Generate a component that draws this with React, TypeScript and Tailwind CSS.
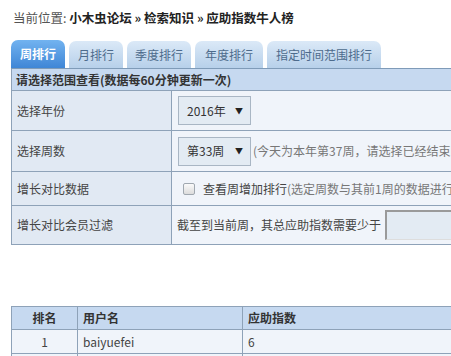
import React from "react";

const tabs = [
  { t: "周排行", w: "w-[54px]" },
  { t: "月排行", w: "w-[54px]" },
  { t: "季度排行", w: "w-[64px]" },
  { t: "年度排行", w: "w-[68px]" },
  { t: "指定时间范围排行", w: "w-[114px]" },
];

function Select({ value }: { value: string }) {
  return (
    <div className="flex h-[29px] w-[73px] items-center justify-between border border-[#a9b6c4] bg-[#e3ebf3] pl-[8px] pr-[7px] text-[12px] text-[#333]">
      <span>{value}</span>
      <span className="text-[8px] text-[#222]">▼</span>
    </div>
  );
}

export default function App() {
  const font = { fontFamily: '"Noto Sans CJK SC", "Noto Sans", sans-serif' };
  return (
    <div className="h-[356px] w-[451px] overflow-hidden bg-white text-[12px] text-[#444]" style={font}>
      <div className="px-[13px] pt-[9px] text-[12.5px] leading-[18px]">
        <span className="text-[#555]">当前位置: </span>
        <span className="font-bold text-[#222]">小木虫论坛 » 检索知识 » 应助指数牛人榜</span>
      </div>

      <div className="ml-[11px] mt-[13px] flex items-end gap-[4px] border-b border-[#7f9bb8]">
        {tabs.map((x, i) => (
          <div
            key={x.t}
            className={
              i === 0
                ? `flex h-[28px] ${x.w} items-center justify-center rounded-t-[7px] bg-gradient-to-b from-[#72b3f0] to-[#3f86d6] font-bold text-white`
                : `flex h-[27px] ${x.w} items-center justify-center rounded-t-[7px] bg-gradient-to-b from-[#dbe9f7] to-[#b7d0ea] text-[#4d6b8c]`
            }
          >
            {x.t}
          </div>
        ))}
      </div>

      <div className="ml-[11px] w-[460px] border-x border-b border-[#8ea2b8] text-[#444]">
        <div className="flex h-[22px] items-center border-b border-[#8ea2b8] bg-[#c6d9f0] px-[4px] font-bold text-[#333]">
          请选择范围查看(数据每60分钟更新一次)
        </div>
        <div className="grid grid-cols-[160px_1fr]">
          <div className="flex h-[40px] items-center border-b border-r border-[#8ea2b8] bg-[#e1e9f3] px-[5px]">选择年份</div>
          <div className="flex h-[40px] items-center border-b border-[#8ea2b8] bg-[#f0f4fa] px-[6px]">
            <Select value="2016年" />
          </div>
          <div className="flex h-[41px] items-center border-b border-r border-[#8ea2b8] bg-[#e1e9f3] px-[5px]">选择周数</div>
          <div className="flex h-[41px] items-center gap-[2px] whitespace-nowrap border-b border-[#8ea2b8] bg-[#f0f4fa] px-[6px]">
            <Select value="第33周" />
            <span className="text-[#777]">(今天为本年第37周，请选择已经结束的周)</span>
          </div>
          <div className="flex h-[34px] items-center border-b border-r border-[#8ea2b8] bg-[#e1e9f3] px-[5px]">增长对比数据</div>
          <div className="flex h-[34px] items-center gap-[8px] whitespace-nowrap border-b border-[#8ea2b8] bg-[#f0f4fa] px-[11px]">
            <span className="h-[12px] w-[12px] rounded-[2px] border border-[#a0a8b0] bg-gradient-to-b from-[#fafafa] to-[#dcdcdc]" />
            <span>查看周增加排行<span className="text-[#777]">(选定周数与其前1周的数据进行对比)</span></span>
          </div>
          <div className="flex h-[38px] items-center border-r border-[#8ea2b8] bg-[#e1e9f3] px-[5px]">增长对比会员过滤</div>
          <div className="flex h-[38px] items-center gap-[4px] whitespace-nowrap bg-[#f0f4fa] pl-[5px]">
            <span>截至到当前周，其总应助指数需要少于</span>
            <span className="h-[30px] w-[100px] border-l-2 border-t-2 border-[#9a9a9a] border-b border-r border-b-[#ddd] border-r-[#ddd] bg-[#e3ebf3]" />
          </div>
        </div>
      </div>

      <div className="ml-[11px] mt-[61px] w-[460px] border border-[#8ea2b8]">
        <div className="grid h-[23px] grid-cols-[66px_165px_1fr] border-b border-[#8ea2b8] bg-[#c6d9f0] font-bold text-[#333]">
          <div className="flex items-center justify-center border-r border-[#8ea2b8]">排名</div>
          <div className="flex items-center border-r border-[#8ea2b8] px-[5px]">用户名</div>
          <div className="flex items-center px-[5px]">应助指数</div>
        </div>
        <div className="grid h-[24px] grid-cols-[66px_165px_1fr] border-b border-[#8ea2b8] bg-[#f0f4fa] text-[#444]">
          <div className="flex items-center justify-center border-r border-[#8ea2b8]">1</div>
          <div className="flex items-center border-r border-[#8ea2b8] px-[5px]">baiyuefei</div>
          <div className="flex items-center px-[5px]">6</div>
        </div>
        <div className="grid h-[24px] grid-cols-[66px_165px_1fr] bg-[#f0f4fa]">
          <div className="border-r border-[#8ea2b8]" />
          <div className="border-r border-[#8ea2b8]" />
          <div />
        </div>
      </div>
    </div>
  );
}
